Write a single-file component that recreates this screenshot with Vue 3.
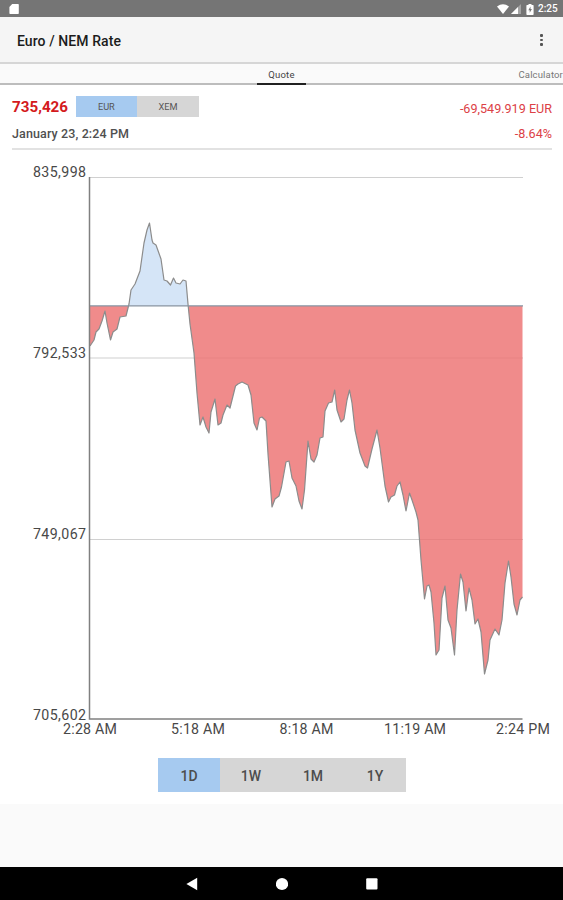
<template>
  <div class="screen">
    <div class="status-bar">
      <svg class="sd-icon" viewBox="0 0 10 12"><path d="M3.2 1H9q.8 0 .8.8v8.400q0 .8-.8.8H1.200q-.8 0-.8-.8V4z" /></svg>
      <div class="status-right">
        <svg class="wifi-icon" viewBox="0 0 12 10"><path d="M6 10 0 2.600Q6-2 12 2.600z" /></svg>
        <svg class="signal-icon" viewBox="0 0 10 10">
          <path d="M10 0v10H0z" opacity=".35" />
          <path d="M7 3v7H0z" />
        </svg>
        <svg class="battery-icon" viewBox="0 0 8 11">
          <path d="M2.500 0h3v1H7q.6 0 .6.7v8.600q0 .7-.7.700H1.100q-.7 0-.7-.7V1.700Q.4 1 1 1h1.500z" />
          <path class="bolt" d="M4.500 2.500 2.300 6.300h1.400v2.500l2.200-3.800H4.500z" />
        </svg>
        <span class="clock">2:25</span>
      </div>
    </div>

    <header class="app-bar">
      <h1>Euro / NEM Rate</h1>
      <button class="menu-btn" aria-label="Menu">
        <i></i><i></i><i></i>
      </button>
    </header>

    <nav class="tabs">
      <span></span>
      <a class="tab active">Quote</a>
      <a class="tab next">Calculator</a>
    </nav>

    <main class="content">
      <section class="summary">
        <div class="row">
          <div class="price-group">
            <span class="price">735,426</span>
            <div class="currency-switch">
              <button
                v-for="c in currencies"
                :key="c"
                :class="{ selected: c === currency }"
                @click="currency = c"
              >{{ c }}</button>
            </div>
          </div>
          <span class="change">-69,549.919 EUR</span>
        </div>
        <div class="row second">
          <span class="date">January 23, 2:24 PM</span>
          <span class="change percent">-8.64%</span>
        </div>
      </section>

      <svg class="chart" width="563" height="600" viewBox="0 150 563 600">
        <defs>
          <clipPath id="above"><rect x="90" y="170" width="433" height="136" /></clipPath>
          <clipPath id="below"><rect x="90" y="306" width="433" height="414" /></clipPath>
        </defs>
        <line v-for="y in gridLines" :key="y" class="grid" x1="90" x2="523" :y1="y" :y2="y" />
        <path class="area-up" :d="areaPath" clip-path="url(#above)" />
        <path class="area-down" :d="areaPath" clip-path="url(#below)" />
        <polyline class="rate" :points="linePoints" />
        <line class="base" x1="90" x2="523" :y1="baseY" :y2="baseY" />
        <path class="axis" d="M89.500 177V719H522.500" />
        <text
          v-for="l in yLabels"
          :key="l.text"
          x="33"
          :y="l.y"
          textLength="53"
        >{{ l.text }}</text>
        <text
          v-for="l in xLabels"
          :key="l.text"
          :x="l.x"
          y="734"
          :textLength="l.w"
          text-anchor="middle"
        >{{ l.text }}</text>
      </svg>

      <div class="range-switch">
        <button
          v-for="r in ranges"
          :key="r"
          :class="{ selected: r === range }"
          @click="range = r"
        >{{ r }}</button>
      </div>
    </main>

    <div class="spacer"></div>

    <footer class="nav-bar">
      <svg viewBox="0 0 12 14"><path d="M11.200 .8v12.400L.4 7z" /></svg>
      <svg viewBox="0 0 12 14"><circle cx="6" cy="7" r="6.100" /></svg>
      <svg viewBox="0 0 12 14"><rect x=".2" y="1.200" width="11.300" height="11.300" rx="1" /></svg>
    </footer>
  </div>
</template>

<script setup>
import { computed, ref } from 'vue';

const currencies = ['EUR', 'XEM'];
const currency = ref('EUR');

const ranges = ['1D', '1W', '1M', '1Y'];
const range = ref('1D');

const baseY = 305.8;
const gridLines = [177.5, 358, 539.5];

const yLabels = [
  { text: '835,998', y: 177 },
  { text: '792,533', y: 357.5 },
  { text: '749,067', y: 538.5 },
  { text: '705,602', y: 719.5 }
];

const xLabels = [
  { text: '2:28 AM', x: 90, w: 54 },
  { text: '5:18 AM', x: 198, w: 54 },
  { text: '8:18 AM', x: 306.500, w: 54 },
  { text: '11:19 AM', x: 415, w: 62 },
  { text: '2:24 PM', x: 523, w: 54 }
];

const points = [
  [90, 346], [94, 340], [96, 332], [99, 329], [102, 321], [105, 311], [107, 323], [110.5, 340],
  [113, 332], [117, 329], [120, 317], [126, 316], [128, 308], [129, 304], [131, 290], [135, 284],
  [140, 271], [144, 243], [147, 230], [149.500, 223], [152, 240], [153, 243], [156, 245], [161, 259],
  [164, 280], [167, 281], [170.500, 285], [173.500, 278], [176, 283], [180, 284], [183, 280], [186, 281],
  [188, 304], [190, 324], [194, 353], [197, 393], [200, 425], [203, 417], [206, 427], [209, 433],
  [211, 412], [215, 399], [218, 425], [221, 423], [223, 415], [227, 405], [230, 408], [235.500, 386],
  [238, 384], [242, 382], [248, 385], [251, 395], [254, 423], [257, 430], [259.500, 418], [262, 417],
  [266, 421], [268, 454], [272, 507], [275, 499], [279, 496], [281.500, 487], [286, 462], [289, 461],
  [292, 478], [296, 486], [299, 501], [302, 509], [304.500, 490], [308, 441], [311, 459], [314, 462],
  [317, 455], [320, 438], [323, 437], [325, 411], [328.500, 403], [332, 402], [334.700, 390], [337, 410],
  [341, 422], [344, 419], [347, 400], [349.500, 390], [352, 403], [355, 430], [360, 453], [365, 466],
  [367.500, 468], [372, 449], [377, 430], [380, 448], [385, 486], [388.500, 502], [391, 497], [394.500, 495],
  [397, 486], [400, 482], [403, 495], [406, 511], [409.500, 493], [412, 500], [416, 512], [418, 520],
  [421, 560], [424.500, 599], [427, 586], [429, 585], [431, 592], [434, 623], [436, 655], [439, 650],
  [442, 598], [445, 586], [448, 620], [451, 628], [454.500, 655], [457, 610], [460.500, 574], [463, 582],
  [466, 611], [469, 588], [472, 600], [475, 624], [478, 619], [481, 632], [484.500, 674], [488, 660],
  [490, 640], [495, 629], [499, 635], [502, 620], [505, 583], [508.500, 561], [511, 577], [514, 604],
  [517, 615], [520, 600], [522.500, 597]
];

const linePoints = computed(() => points.map(p => p.join(',')).join(' '));
const areaPath = computed(() => `M90,${baseY} L${linePoints.value} L522.5,${baseY} Z`);
</script>

<style>
body { margin: 0; background: #fafafa; }
</style>

<style scoped>
.screen {
  width: 563px;
  height: 900px;
  display: flex;
  flex-direction: column;
  overflow: hidden;
  background: #fafafa;
  font-family: Roboto, sans-serif;
}

button {
  border: 0;
  padding: 0;
  background: none;
  font-family: inherit;
}

/* Status bar */
.status-bar {
  flex: none;
  height: 17px;
  box-sizing: border-box;
  padding: 1px 5px 0 9px;
  display: flex;
  align-items: center;
  justify-content: space-between;
  background: #757575;
}
.status-bar svg { fill: #fff; display: block; }
.sd-icon { width: 10px; height: 12px; }
.status-right { display: flex; align-items: center; }
.wifi-icon { width: 12px; height: 10px; margin-right: 2px; }
.signal-icon { width: 10px; height: 10px; margin-right: 5px; }
.battery-icon { width: 8px; height: 11px; margin-right: 4px; }
.status-bar .bolt { fill: #757575; }
.clock {
  width: 20px;
  color: #fff;
  font-size: 10px;
  line-height: 12px;
  font-weight: 500;
}

/* App bar */
.app-bar {
  flex: none;
  height: 47px;
  box-sizing: border-box;
  padding: 0 20px 0 17px;
  display: flex;
  align-items: center;
  justify-content: space-between;
  background: #f5f5f5;
  border-bottom: 2px solid #d6d6d6;
}
.app-bar h1 {
  margin: 3px 0 0;
  color: #1c1c1c;
  font-size: 14px;
  font-weight: 500;
  letter-spacing: .08px;
}
.menu-btn { display: grid; gap: 2px; margin-top: 1px; padding: 0; }
.menu-btn i { width: 3px; height: 2.500px; background: #555; border-radius: 1px; }

/* Tabs */
.tabs {
  flex: none;
  height: 21px;
  box-sizing: border-box;
  display: grid;
  grid-template-columns: 257px 49px 1fr;
  border-bottom: 2px solid #bdbdbd;
}
.tab {
  height: 21px;
  box-sizing: border-box;
  font-size: 9.500px;
  line-height: 21px;
  letter-spacing: .2px;
  text-align: center;
  white-space: nowrap;
  color: #777;
}
.tab.active { color: #444; border-bottom: 2px solid #212121; }
.tab.next { text-align: right; letter-spacing: .15px; }

/* Quote */
.content {
  flex: none;
  height: 719px;
  background: #fff;
}
.summary {
  height: 65px;
  box-sizing: border-box;
  margin: 0 11px 0 12px;
  padding-top: 10px;
  border-bottom: 2px solid #e2e2e2;
}
.row {
  display: flex;
  height: 24px;
  align-items: center;
  justify-content: space-between;
}
.row.second { height: 28px; }
.price-group { display: flex; align-items: center; }
.price {
  width: 63.500px;
  color: #d41a20;
  font-size: 15.200px;
  font-weight: 700;
}
.currency-switch { display: flex; margin-top: -1px; }
.currency-switch button {
  width: 61.700px;
  height: 21px;
  background: #d6d6d6;
  color: #555;
  font-size: 9.200px;
}
.currency-switch button.selected,
.range-switch button.selected { background: #a6caf0; }
.date { color: #505050; font-size: 12.500px; font-weight: 500; letter-spacing: .12px; }
.change { color: #dc4146; font-size: 12.600px; margin-top: 3px; }
.change.percent { margin-top: 0; }

/* Chart */
.chart { display: block; }
.chart text { fill: #484848; font-size: 14.200px; }
.area-up { fill: #d5e5f7; }
.area-down { fill: #ec7070; fill-opacity: .81; }
.grid { stroke: #d0d0d0; stroke-width: 1.200; }
.rate { fill: none; stroke: #8c8c8c; stroke-width: 1.200; stroke-linejoin: round; }
.base { stroke: #8793a0; stroke-width: 1.200; }
.axis { fill: none; stroke: #808080; stroke-width: 1.500; }

.range-switch {
  display: flex;
  width: 248px;
  margin: 8px 0 0 158px;
}
.range-switch button {
  flex: 1;
  height: 34px;
  padding-top: 2px;
  background: #d6d6d6;
  color: #4d4d4d;
  font-size: 14px;
  font-weight: 500;
}

.spacer { flex: 1; }

/* System navigation */
.nav-bar {
  flex: none;
  height: 33px;
  display: flex;
  align-items: center;
  justify-content: center;
  gap: 78px;
  background: #000;
}
.nav-bar svg { width: 12px; height: 14px; fill: #fff; }
</style>
